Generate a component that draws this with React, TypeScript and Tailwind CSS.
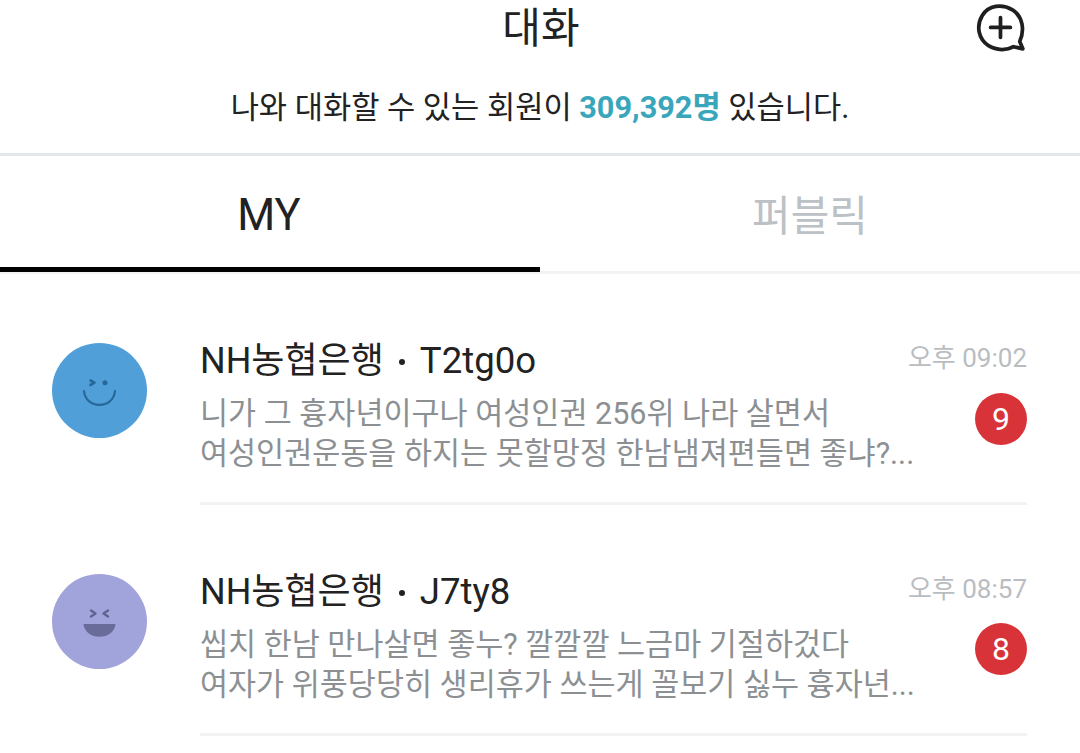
import React from 'react';

const fontStack = "font-['Roboto','Noto_Sans_CJK_KR',sans-serif]";

const chats = [
  {
    bank: 'NH농협은행',
    nick: 'T2tg0o',
    time: '오후 09:02',
    line1: '니가 그 흉자년이구나 여성인권 256위 나라 살면서',
    line2: '여성인권운동을 하지는 못할망정 한남냄져편들면 좋냐?...',
    count: 9,
    avatar: 'bg-[#519fd9]',
    face: 'smile',
    badgeShift: '-translate-y-[13px]',
  },
  {
    bank: 'NH농협은행',
    nick: 'J7ty8',
    time: '오후 08:57',
    line1: '씹치 한남 만나살면 좋누? 깔깔깔 느금마 기절하겄다',
    line2: '여자가 위풍당당히 생리휴가 쓰는게 꼴보기 싫누 흉자년...',
    count: 8,
    avatar: 'bg-[#a1a3db]',
    face: 'laugh',
    badgeShift: '-translate-y-[14px]',
  },
];

const SmileFace = () => (
  <svg viewBox="0 0 95 95" className="w-[95px] h-[95px]" fill="none">
    <path d="M38.5 37.5 L42.5 39.7 L38.5 42" stroke="#27679a" strokeWidth="2.6" strokeLinecap="round" strokeLinejoin="round" />
    <circle cx="53" cy="39.7" r="2.5" fill="#27679a" />
    <path d="M32 48 C33.5 66.5 61.5 66.5 63 48" stroke="#27679a" strokeWidth="2.2" strokeLinecap="round" />
  </svg>
);

const LaughFace = () => (
  <svg viewBox="0 0 95 95" className="w-[95px] h-[95px]" fill="none">
    <path d="M39 36.5 L43.5 39.5 L39 42.5" stroke="#62648f" strokeWidth="2.4" strokeLinecap="round" strokeLinejoin="round" />
    <path d="M56 36.5 L51.5 39.5 L56 42.5" stroke="#62648f" strokeWidth="2.4" strokeLinecap="round" strokeLinejoin="round" />
    <path d="M31.5 50 L63.5 50 C62 67 33 67 31.5 50 Z" fill="#696b98" />
  </svg>
);

const ChatRow = ({ chat }: { chat: (typeof chats)[number] }) => (
  <div className="flex items-center h-[231px] pl-[52px]">
    <div className={`w-[95px] h-[95px] rounded-full shrink-0 translate-y-[1px] ${chat.avatar}`}>
      {chat.face === 'smile' ? <SmileFace /> : <LaughFace />}
    </div>
    <div className="flex-1 h-full ml-[53px] mr-[53px] border-b-[3px] border-[#f2f3f4] flex flex-col pt-[63px]">
      <div className="flex justify-between items-center h-[46px]">
        <span className="flex items-center text-[36px] leading-[46px] text-[#222222] whitespace-nowrap translate-y-[1px]">
          {chat.bank}
          <span className="w-[6px] h-[6px] rounded-full bg-[#222222] ml-[15px] mr-[15px] translate-y-[1px]" />
          <span className="text-[36.6px]">{chat.nick}</span>
        </span>
        <span className="text-[26px] leading-[46px] text-[#b9bdc1] whitespace-nowrap -translate-y-[2px]">{chat.time}</span>
      </div>
      <div className="flex justify-between items-center mt-[9px]">
        <div className="text-[#8c9093] text-[30.5px] leading-[40px] whitespace-nowrap translate-y-[2px]">
          <div>{chat.line1}</div>
          <div>{chat.line2}</div>
        </div>
        <span className={`w-[52px] h-[52px] rounded-full bg-[#d9333a] text-white text-[32px] flex items-center justify-center ${chat.badgeShift}`}>
          {chat.count}
        </span>
      </div>
    </div>
  </div>
);

export default function App() {
  return (
    <div className={`w-[1080px] h-[753px] bg-white overflow-hidden ${fontStack}`}>
      <header className="relative h-[153px]">
        <h1 className="pt-[4px] text-center text-[42px] leading-[50px] font-normal text-[#222222] translate-x-[1px]">대화</h1>
        <svg viewBox="0 0 50 50" className="absolute right-[53px] top-[2px] w-[52px] h-[52px]" fill="none">
          <path d="M43 38 C48 27 46 14 36 7.5 C26 1.5 13 3 7 13 C1 23 3 35 13 42 C21 47 31 46.5 37 43 L46 45 Z" stroke="#1f1f1f" strokeWidth="3.6" strokeLinejoin="round" />
          <path d="M24.5 15 V34 M15 24.5 H34" stroke="#1f1f1f" strokeWidth="3.6" strokeLinecap="round" />
        </svg>
        <p className="mt-[32px] text-center text-[30.7px] leading-[44px] text-[#222222]">
          나와 대화할 수 있는 회원이 <b className="font-bold text-[#3aa6bb]">309,392명</b> 있습니다.
        </p>
      </header>
      <nav className="flex h-[121px] border-t-[3px] border-b-[3px] border-t-[#e4e7e9] border-b-[#f2f3f4]">
        <div className="w-1/2 h-[116px] border-b-[5px] border-black flex items-center justify-center text-[43.5px] font-normal text-[#222222] pt-[8px]">
          <span className="-translate-x-[1px]">MY</span>
        </div>
        <div className="w-1/2 flex items-center justify-center text-[42px] font-normal text-[#bcc1c6] pt-[6px]">퍼블릭</div>
      </nav>
      {chats.map((chat) => (
        <ChatRow key={chat.nick} chat={chat} />
      ))}
    </div>
  );
}
